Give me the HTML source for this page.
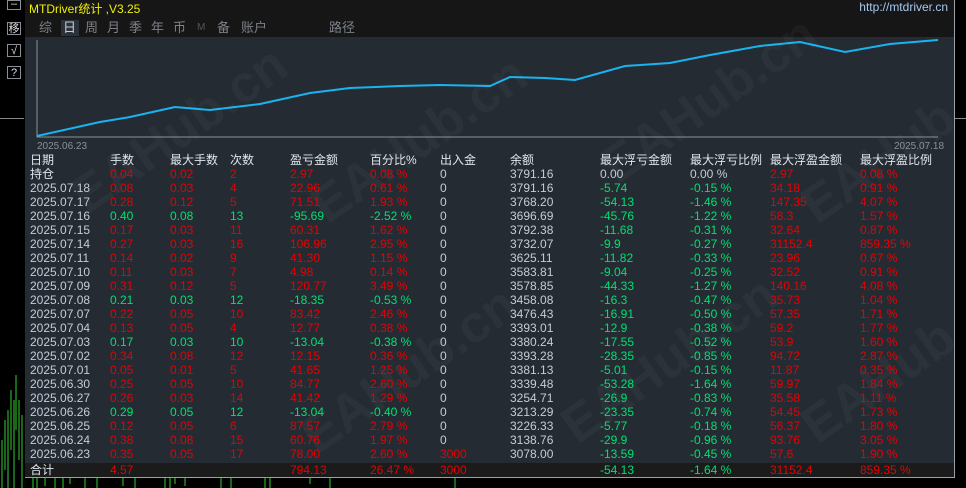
<!DOCTYPE html>
<html><head><meta charset="utf-8">
<style>
body{margin:0;width:966px;height:488px;background:#000;overflow:hidden;position:relative;font-family:"Liberation Sans","Noto Sans CJK SC",sans-serif;}
.btn{position:absolute;left:7px;width:14px;height:13px;border:1px solid #8a9098;color:#ddd;font-size:11px;line-height:13px;text-align:center;box-sizing:border-box;}
#panel{position:absolute;left:25px;top:0;width:929px;height:477px;background:#252b33;border-right:1px solid #9aa0a8;border-bottom:1px solid #9aa0a8;overflow:hidden}
#top{position:absolute;left:0;top:0;width:929px;height:37px;background:#161616}
.title{position:absolute;left:4px;top:0;color:#f0f000;font-size:12px}
.url{position:absolute;right:6px;top:0;color:#a8c8f0;font-size:12px}
.tab{position:absolute;top:19px;color:#7c8088;font-size:13px;line-height:17px}
.row{position:absolute;left:0;width:929px;height:14px;font-size:12px;line-height:14px}
.row span{position:absolute;top:0;white-space:nowrap}
.h{color:#dfe6ee;font-size:12px}
.g{color:#c4ccd8}.r{color:#e80000}.gr{color:#00e070}
.wm{position:absolute;color:rgba(255,255,255,0.035);font-size:52px;font-weight:bold;transform:rotate(-35deg);white-space:nowrap}
</style></head><body>
<div class="btn" style="top:0;height:10px;line-height:6px">–</div>
<div class="btn" style="top:22px">移</div>
<div class="btn" style="top:44px">√</div>
<div class="btn" style="top:66px">?</div>
<div style="position:absolute;left:0;top:118px;width:24px;height:1px;background:#888"></div>
<div style="position:absolute;left:955px;top:118px;width:11px;height:1px;background:#888"></div>
<svg style="position:absolute;left:0;top:370px" width="25" height="118"><g stroke="#30d030" stroke-width="1">
<path d="M2 70V118M5 50V100M8 40V118M11 20V80M14 30V118M16 5V60M19 30V90M22 45V118"/></g></svg>
<svg style="position:absolute;left:25px;top:478px" width="930" height="10"><g stroke="#30d030"><path d="M8 0V10M12 0V10M20 0V8M30 0V10M38 0V10M45 0V6M60 0V10M72 0V10M98 0V8M110 0V10M140 0V10M145 0V10M150 0V6M160 0V8M196 0V10M206 0V10M240 0V10M245 0V10M285 0V6M305 0V10M430 0V10"/></g></svg>
<div id="panel">
<div id="top">
<div class="title">MTDriver统计 ,V3.25</div>
<div class="url">http://mtdriver.cn</div>
<div style="position:absolute;left:36px;top:20px;width:18px;height:16px;background:#2c323b"></div>
<div class="tab" style="left:14px">综</div><div class="tab" style="left:38px;color:#c8ccd4">日</div><div class="tab" style="left:60px">周</div><div class="tab" style="left:82px">月</div><div class="tab" style="left:104px">季</div><div class="tab" style="left:126px">年</div><div class="tab" style="left:148px">币</div><div class="tab" style="left:172px;font-size:10px;color:#555">M</div><div class="tab" style="left:192px">备</div><div class="tab" style="left:216px">账户</div><div class="tab" style="left:304px">路径</div>
</div>
<svg style="position:absolute;left:0;top:0" width="929" height="150">
<path d="M12 40V137H913" stroke="#8a9098" fill="none"/>
<polyline fill="none" stroke="#18b4f0" stroke-width="2" points="12,136 75,122 105,117 150,107 185,110 235,104 285,93 325,88 375,86 415,85 465,86 485,77 520,78 550,80 600,66 645,63 685,55 735,46 775,42 820,52 865,44 913,40"/>
<text x="12" y="149" fill="#8a9098" font-size="10" font-family="Liberation Sans">2025.06.23</text>
<text x="869" y="149" fill="#8a9098" font-size="10" font-family="Liberation Sans">2025.07.18</text>
</svg>
<div class="wm" style="left:30px;top:100px">EAHub.cn</div>
<div class="wm" style="left:270px;top:110px">EAHub.cn</div>
<div class="wm" style="left:560px;top:70px">EAHub.cn</div>
<div class="wm" style="left:760px;top:110px">EAHub.cn</div>
<div class="wm" style="left:260px;top:340px">EAHub.cn</div>
<div class="wm" style="left:520px;top:330px">EAHub.cn</div>
<div class="wm" style="left:760px;top:330px">EAHub.cn</div>

<div class="row h" style="top:153px"><span style="left:5px">日期</span><span style="left:85px">手数</span><span style="left:145px">最大手数</span><span style="left:205px">次数</span><span style="left:265px">盈亏金额</span><span style="left:345px">百分比%</span><span style="left:415px">出入金</span><span style="left:485px">余额</span><span style="left:575px">最大浮亏金额</span><span style="left:665px">最大浮亏比例</span><span style="left:745px">最大浮盈金额</span><span style="left:835px">最大浮盈比例</span></div>
<div style="position:absolute;left:0;top:463px;width:929px;height:14px;background:#1b1b1b"></div>
<div class="row r" style="top:463px"><span class="h" style="left:5px">合计</span><span style="left:85px">4.57</span><span style="left:265px">794.13</span><span style="left:345px">26.47 %</span><span style="left:415px">3000</span><span class="gr" style="left:575px">-54.13</span><span class="gr" style="left:665px">-1.64 %</span><span style="left:745px">31152.4</span><span style="left:835px">859.35 %</span></div>

<div class="row r" style="top:167px"><span class="h" style="left:5px">持仓</span><span style="left:85px">0.04</span><span style="left:145px">0.02</span><span style="left:205px">2</span><span style="left:265px">2.97</span><span style="left:345px">0.08 %</span><span class="g" style="left:415px">0</span><span class="g" style="left:485px">3791.16</span><span class="g" style="left:575px">0.00</span><span class="g" style="left:665px">0.00 %</span><span style="left:745px">2.97</span><span style="left:835px">0.08 %</span></div>
<div class="row r" style="top:181px"><span class="g" style="left:5px">2025.07.18</span><span style="left:85px">0.08</span><span style="left:145px">0.03</span><span style="left:205px">4</span><span style="left:265px">22.96</span><span style="left:345px">0.61 %</span><span class="g" style="left:415px">0</span><span class="g" style="left:485px">3791.16</span><span class="gr" style="left:575px">-5.74</span><span class="gr" style="left:665px">-0.15 %</span><span style="left:745px">34.18</span><span style="left:835px">0.91 %</span></div>
<div class="row r" style="top:195px"><span class="g" style="left:5px">2025.07.17</span><span style="left:85px">0.28</span><span style="left:145px">0.12</span><span style="left:205px">5</span><span style="left:265px">71.51</span><span style="left:345px">1.93 %</span><span class="g" style="left:415px">0</span><span class="g" style="left:485px">3768.20</span><span class="gr" style="left:575px">-54.13</span><span class="gr" style="left:665px">-1.46 %</span><span style="left:745px">147.35</span><span style="left:835px">4.07 %</span></div>
<div class="row gr" style="top:209px"><span class="g" style="left:5px">2025.07.16</span><span style="left:85px">0.40</span><span style="left:145px">0.08</span><span style="left:205px">13</span><span style="left:265px">-95.69</span><span style="left:345px">-2.52 %</span><span class="g" style="left:415px">0</span><span class="g" style="left:485px">3696.69</span><span style="left:575px">-45.76</span><span style="left:665px">-1.22 %</span><span class="r" style="left:745px">58.3</span><span class="r" style="left:835px">1.57 %</span></div>
<div class="row r" style="top:223px"><span class="g" style="left:5px">2025.07.15</span><span style="left:85px">0.17</span><span style="left:145px">0.03</span><span style="left:205px">11</span><span style="left:265px">60.31</span><span style="left:345px">1.62 %</span><span class="g" style="left:415px">0</span><span class="g" style="left:485px">3792.38</span><span class="gr" style="left:575px">-11.68</span><span class="gr" style="left:665px">-0.31 %</span><span style="left:745px">32.64</span><span style="left:835px">0.87 %</span></div>
<div class="row r" style="top:237px"><span class="g" style="left:5px">2025.07.14</span><span style="left:85px">0.27</span><span style="left:145px">0.03</span><span style="left:205px">16</span><span style="left:265px">106.96</span><span style="left:345px">2.95 %</span><span class="g" style="left:415px">0</span><span class="g" style="left:485px">3732.07</span><span class="gr" style="left:575px">-9.9</span><span class="gr" style="left:665px">-0.27 %</span><span style="left:745px">31152.4</span><span style="left:835px">859.35 %</span></div>
<div class="row r" style="top:251px"><span class="g" style="left:5px">2025.07.11</span><span style="left:85px">0.14</span><span style="left:145px">0.02</span><span style="left:205px">9</span><span style="left:265px">41.30</span><span style="left:345px">1.15 %</span><span class="g" style="left:415px">0</span><span class="g" style="left:485px">3625.11</span><span class="gr" style="left:575px">-11.82</span><span class="gr" style="left:665px">-0.33 %</span><span style="left:745px">23.96</span><span style="left:835px">0.67 %</span></div>
<div class="row r" style="top:265px"><span class="g" style="left:5px">2025.07.10</span><span style="left:85px">0.11</span><span style="left:145px">0.03</span><span style="left:205px">7</span><span style="left:265px">4.98</span><span style="left:345px">0.14 %</span><span class="g" style="left:415px">0</span><span class="g" style="left:485px">3583.81</span><span class="gr" style="left:575px">-9.04</span><span class="gr" style="left:665px">-0.25 %</span><span style="left:745px">32.52</span><span style="left:835px">0.91 %</span></div>
<div class="row r" style="top:279px"><span class="g" style="left:5px">2025.07.09</span><span style="left:85px">0.31</span><span style="left:145px">0.12</span><span style="left:205px">5</span><span style="left:265px">120.77</span><span style="left:345px">3.49 %</span><span class="g" style="left:415px">0</span><span class="g" style="left:485px">3578.85</span><span class="gr" style="left:575px">-44.33</span><span class="gr" style="left:665px">-1.27 %</span><span style="left:745px">140.16</span><span style="left:835px">4.08 %</span></div>
<div class="row gr" style="top:293px"><span class="g" style="left:5px">2025.07.08</span><span style="left:85px">0.21</span><span style="left:145px">0.03</span><span style="left:205px">12</span><span style="left:265px">-18.35</span><span style="left:345px">-0.53 %</span><span class="g" style="left:415px">0</span><span class="g" style="left:485px">3458.08</span><span style="left:575px">-16.3</span><span style="left:665px">-0.47 %</span><span class="r" style="left:745px">35.73</span><span class="r" style="left:835px">1.04 %</span></div>
<div class="row r" style="top:307px"><span class="g" style="left:5px">2025.07.07</span><span style="left:85px">0.22</span><span style="left:145px">0.05</span><span style="left:205px">10</span><span style="left:265px">83.42</span><span style="left:345px">2.46 %</span><span class="g" style="left:415px">0</span><span class="g" style="left:485px">3476.43</span><span class="gr" style="left:575px">-16.91</span><span class="gr" style="left:665px">-0.50 %</span><span style="left:745px">57.35</span><span style="left:835px">1.71 %</span></div>
<div class="row r" style="top:321px"><span class="g" style="left:5px">2025.07.04</span><span style="left:85px">0.13</span><span style="left:145px">0.05</span><span style="left:205px">4</span><span style="left:265px">12.77</span><span style="left:345px">0.38 %</span><span class="g" style="left:415px">0</span><span class="g" style="left:485px">3393.01</span><span class="gr" style="left:575px">-12.9</span><span class="gr" style="left:665px">-0.38 %</span><span style="left:745px">59.2</span><span style="left:835px">1.77 %</span></div>
<div class="row gr" style="top:335px"><span class="g" style="left:5px">2025.07.03</span><span style="left:85px">0.17</span><span style="left:145px">0.03</span><span style="left:205px">10</span><span style="left:265px">-13.04</span><span style="left:345px">-0.38 %</span><span class="g" style="left:415px">0</span><span class="g" style="left:485px">3380.24</span><span style="left:575px">-17.55</span><span style="left:665px">-0.52 %</span><span class="r" style="left:745px">53.9</span><span class="r" style="left:835px">1.60 %</span></div>
<div class="row r" style="top:349px"><span class="g" style="left:5px">2025.07.02</span><span style="left:85px">0.34</span><span style="left:145px">0.08</span><span style="left:205px">12</span><span style="left:265px">12.15</span><span style="left:345px">0.36 %</span><span class="g" style="left:415px">0</span><span class="g" style="left:485px">3393.28</span><span class="gr" style="left:575px">-28.35</span><span class="gr" style="left:665px">-0.85 %</span><span style="left:745px">94.72</span><span style="left:835px">2.87 %</span></div>
<div class="row r" style="top:363px"><span class="g" style="left:5px">2025.07.01</span><span style="left:85px">0.05</span><span style="left:145px">0.01</span><span style="left:205px">5</span><span style="left:265px">41.65</span><span style="left:345px">1.25 %</span><span class="g" style="left:415px">0</span><span class="g" style="left:485px">3381.13</span><span class="gr" style="left:575px">-5.01</span><span class="gr" style="left:665px">-0.15 %</span><span style="left:745px">11.87</span><span style="left:835px">0.35 %</span></div>
<div class="row r" style="top:377px"><span class="g" style="left:5px">2025.06.30</span><span style="left:85px">0.25</span><span style="left:145px">0.05</span><span style="left:205px">10</span><span style="left:265px">84.77</span><span style="left:345px">2.60 %</span><span class="g" style="left:415px">0</span><span class="g" style="left:485px">3339.48</span><span class="gr" style="left:575px">-53.28</span><span class="gr" style="left:665px">-1.64 %</span><span style="left:745px">59.97</span><span style="left:835px">1.84 %</span></div>
<div class="row r" style="top:391px"><span class="g" style="left:5px">2025.06.27</span><span style="left:85px">0.26</span><span style="left:145px">0.03</span><span style="left:205px">14</span><span style="left:265px">41.42</span><span style="left:345px">1.29 %</span><span class="g" style="left:415px">0</span><span class="g" style="left:485px">3254.71</span><span class="gr" style="left:575px">-26.9</span><span class="gr" style="left:665px">-0.83 %</span><span style="left:745px">35.58</span><span style="left:835px">1.11 %</span></div>
<div class="row gr" style="top:405px"><span class="g" style="left:5px">2025.06.26</span><span style="left:85px">0.29</span><span style="left:145px">0.05</span><span style="left:205px">12</span><span style="left:265px">-13.04</span><span style="left:345px">-0.40 %</span><span class="g" style="left:415px">0</span><span class="g" style="left:485px">3213.29</span><span style="left:575px">-23.35</span><span style="left:665px">-0.74 %</span><span class="r" style="left:745px">54.45</span><span class="r" style="left:835px">1.73 %</span></div>
<div class="row r" style="top:419px"><span class="g" style="left:5px">2025.06.25</span><span style="left:85px">0.12</span><span style="left:145px">0.05</span><span style="left:205px">6</span><span style="left:265px">87.57</span><span style="left:345px">2.79 %</span><span class="g" style="left:415px">0</span><span class="g" style="left:485px">3226.33</span><span class="gr" style="left:575px">-5.77</span><span class="gr" style="left:665px">-0.18 %</span><span style="left:745px">56.37</span><span style="left:835px">1.80 %</span></div>
<div class="row r" style="top:433px"><span class="g" style="left:5px">2025.06.24</span><span style="left:85px">0.38</span><span style="left:145px">0.08</span><span style="left:205px">15</span><span style="left:265px">60.76</span><span style="left:345px">1.97 %</span><span class="g" style="left:415px">0</span><span class="g" style="left:485px">3138.76</span><span class="gr" style="left:575px">-29.9</span><span class="gr" style="left:665px">-0.96 %</span><span style="left:745px">93.76</span><span style="left:835px">3.05 %</span></div>
<div class="row r" style="top:447px"><span class="g" style="left:5px">2025.06.23</span><span style="left:85px">0.35</span><span style="left:145px">0.05</span><span style="left:205px">17</span><span style="left:265px">78.00</span><span style="left:345px">2.60 %</span><span style="left:415px">3000</span><span class="g" style="left:485px">3078.00</span><span class="gr" style="left:575px">-13.59</span><span class="gr" style="left:665px">-0.45 %</span><span style="left:745px">57.6</span><span style="left:835px">1.90 %</span></div>
</div>
</body></html>
